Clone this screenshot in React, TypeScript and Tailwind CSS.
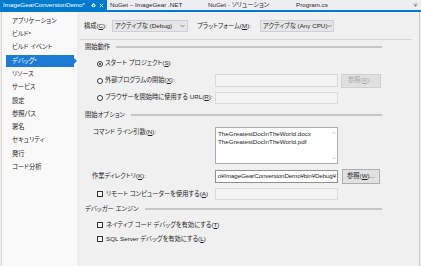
import React from "react";

const sideItems = [
  "アプリケーション",
  "ビルド*",
  "ビルド イベント",
  "デバッグ*",
  "リソース",
  "サービス",
  "設定",
  "参照パス",
  "署名",
  "セキュリティ",
  "発行",
  "コード分析",
];

function Chevron() {
  return (
    <svg width="5" height="4" viewBox="0 0 5 4" className="shrink-0">
      <path d="M0.5 1 L2.5 3 L4.5 1" fill="none" stroke="#717171" strokeWidth="0.8" />
    </svg>
  );
}

function Select({ width, text }: { width: string; text: string }) {
  return (
    <div
      className={`flex h-[12px] ${width} items-center justify-between border border-[#cccedb] bg-[#e6e6e6] pl-[2px] pr-[2px] text-[#1e1e1e]`}
    >
      <span>{text}</span>
      <Chevron />
    </div>
  );
}

function GroupHeader({ label, className = "mt-[2px]" }: { label: string; className?: string }) {
  return (
    <div className={`ml-[8px] flex h-[10px] w-[297px] items-center ${className}`}>
      <span className="text-[#1e1e1e]">{label}</span>
      <div className="ml-[6px] h-[2px] flex-1 bg-[#c6c6c6]" />
    </div>
  );
}

function Radio({ checked }: { checked?: boolean }) {
  return (
    <div className="flex h-[6px] w-[6px] shrink-0 items-center justify-center rounded-full border border-[#333333] bg-white">
      {checked && <div className="h-[2px] w-[2px] rounded-full bg-[#1e1e1e]" />}
    </div>
  );
}

function Check() {
  return <div className="h-[6px] w-[6px] shrink-0 border border-[#333333] bg-white" />;
}

function DisabledInput({ h = "h-[13px]" }: { h?: string }) {
  return <div className={`${h} w-[123px] shrink-0 border border-[#d9d9d9] bg-[#f3f3f3]`} />;
}

export default function App() {
  return (
    <div className="flex h-[266px] w-[421px] flex-col overflow-hidden whitespace-nowrap bg-[#f0f0f0] font-['Liberation_Sans','Noto_Sans_CJK_JP',sans-serif] text-[6.25px] leading-none text-[#1e1e1e] [font-feature-settings:'palt']">
      {/* tab strip */}
      <div className="flex h-[10px] shrink-0 items-center bg-[#eeeef2]">
        <div className="flex h-full w-[107px] items-center bg-[#007acc] pl-[3px] text-white">
          <span>ImageGearConversionDemo*</span>
          <svg width="5" height="5" viewBox="0 0 5 5" className="ml-[6px]">
            <rect x="1.3" y="1.3" width="2.4" height="2.4" fill="none" stroke="#ffffff" strokeWidth="0.7" />
            <path d="M0 2.5 H1.3 M2.5 0 V1.3 M3.7 2.5 H5" stroke="#ffffff" strokeWidth="0.7" />
          </svg>
          <svg width="5" height="5" viewBox="0 0 5 5" className="ml-[3px]">
            <path d="M0.8 0.8 L4.2 4.2 M4.2 0.8 L0.8 4.2" stroke="#ffffff" strokeWidth="0.8" />
          </svg>
        </div>
        <span className="ml-[3px] w-[98px]">NuGet – ImageGear .NET</span>
        <span className="w-[88px]">NuGet - ソリューション</span>
        <span>Program.cs</span>
        <div className="flex-1" />
        <svg width="5" height="5" viewBox="0 0 5 5" className="mr-[3px]">
          <path d="M0.5 1 H4.5" stroke="#717171" strokeWidth="0.6" />
          <path d="M1 2 L2.5 3.8 L4 2 Z" fill="#717171" />
        </svg>
      </div>
      <div className="h-[2px] shrink-0 bg-[#007acc]" />

      <div className="flex flex-1">
        {/* left navigation */}
        <div className="ml-[1px] w-[76px] shrink-0 border-l border-[#d6d6d6] bg-[#f9f9f9] pt-[2px]">
          {sideItems.map((item) =>
            item === "デバッグ*" ? (
              <div key={item} className="flex h-[13.33px] items-center pl-[4px]">
                <div className="flex h-[12px] w-[68px] items-center bg-[#1c7cd5] pl-[6px] text-white">
                  {item}
                </div>
                <div className="h-0 w-0 border-y-[3px] border-l-[3px] border-y-transparent border-l-[#1c7cd5]" />
              </div>
            ) : (
              <div key={item} className="flex h-[13.33px] items-center pl-[10px]">
                {item}
              </div>
            )
          )}
        </div>

        {/* property page */}
        <div className="mr-[1px] flex-1 border-r border-[#cccccc] bg-[#f0f0f0] pt-[8px]">
          <div className="flex h-[12px] items-center pl-[7px]">
            <span className="w-[28px]">
              構成(<u>C</u>):
            </span>
            <Select width="w-[76px]" text="アクティブな (Debug)" />
            <span className="ml-[9px] w-[63px]">
              プラットフォーム(<u>M</u>):
            </span>
            <Select width="w-[74px]" text="アクティブな (Any CPU)" />
          </div>

          <div className="ml-[3px] mt-[7px] h-px w-[332px] bg-[#d8d8d8]" />

          <GroupHeader label="開始動作" />
          <div className="ml-[15px] mt-[3px] w-[289px]">
            <div className="flex h-[17px] items-center">
              <div className="flex w-[123px] items-center gap-[2px] pl-[5px]">
                <Radio checked />
                <span>
                  スタート プロジェクト(<u>S</u>)
                </span>
              </div>
            </div>
            <div className="flex h-[17px] items-center">
              <div className="flex w-[123px] shrink-0 items-center gap-[2px] pl-[5px]">
                <Radio />
                <span>
                  外部プログラムの開始(<u>X</u>):
                </span>
              </div>
              <DisabledInput />
              <div className="ml-[3px] flex h-[14px] w-[40px] items-center justify-center border border-[#d0d0d0] bg-[#e0e0e0] text-[#a6a6a6]">
                参照(<u>R</u>)...
              </div>
            </div>
            <div className="flex h-[17px] items-center">
              <div className="flex w-[123px] shrink-0 items-center gap-[2px] pl-[5px]">
                <Radio />
                <span>
                  ブラウザーを開始時に使用する URL(<u>R</u>):
                </span>
              </div>
              <DisabledInput h="h-[12px]" />
            </div>
          </div>

          <GroupHeader label="開始オプション" className="mt-[4px]" />
          <div className="ml-[15px] w-[289px]">
            <div className="mt-[7px] flex">
              <div className="w-[123px] shrink-0 pl-[1px] pt-[2px]">
                コマンド ライン引数(<u>N</u>):
              </div>
              <div className="flex h-[37px] w-[123px] border border-[#abadb3] bg-white">
                <div className="flex-1 pl-[2px] pt-[2px] leading-[8px]">
                  <div>TheGreatestDocInTheWorld.docx</div>
                  <div>TheGreatestDocInTheWorld.pdf</div>
                </div>
                <div className="flex w-[7px] flex-col items-center justify-between py-[3px]">
                  <svg width="4" height="3" viewBox="0 0 4 3">
                    <path d="M0.5 2.5 L2 1 L3.5 2.5" fill="none" stroke="#c2c2c2" strokeWidth="0.7" />
                  </svg>
                  <svg width="4" height="3" viewBox="0 0 4 3">
                    <path d="M0.5 0.5 L2 2 L3.5 0.5" fill="none" stroke="#c2c2c2" strokeWidth="0.7" />
                  </svg>
                </div>
              </div>
            </div>

            <div className="mt-[5px] flex h-[14px] items-center">
              <div className="w-[123px] shrink-0">
                作業ディレクトリ(<u>K</u>):
              </div>
              <div className="flex h-[13px] w-[123px] shrink-0 items-center justify-end overflow-hidden border border-[#8f8f8f] bg-white pr-[1px]">
                <span className="shrink-0 tracking-[-0.15px]">o¥ImageGearConversionDemo¥bin¥Debug¥</span>
              </div>
              <div className="ml-[4px] flex h-[15px] w-[38px] items-center justify-center border border-[#adadad] bg-[#e1e1e1]">
                参照(<u>W</u>)...
              </div>
            </div>

            <div className="mt-[5px] flex h-[12px] items-center">
              <div className="flex w-[123px] shrink-0 items-center gap-[3px] pl-[5px]">
                <Check />
                <span>
                  リモート コンピューターを使用する(<u>A</u>)
                </span>
              </div>
              <DisabledInput h="h-[12px]" />
            </div>
          </div>

          <GroupHeader label="デバッガー エンジン" className="mt-[4px]" />
          <div className="ml-[15px] w-[289px]">
            <div className="mt-[5px] flex h-[12px] items-center gap-[3px] pl-[5px]">
              <Check />
              <span>
                ネイティブ コード デバッグを有効にする(<u>T</u>)
              </span>
            </div>
            <div className="mt-[2px] flex h-[12px] items-center gap-[3px] pl-[5px]">
              <Check />
              <span>
                SQL Server デバッグを有効にする(<u>L</u>)
              </span>
            </div>
          </div>
        </div>
      </div>
    </div>
  );
}
